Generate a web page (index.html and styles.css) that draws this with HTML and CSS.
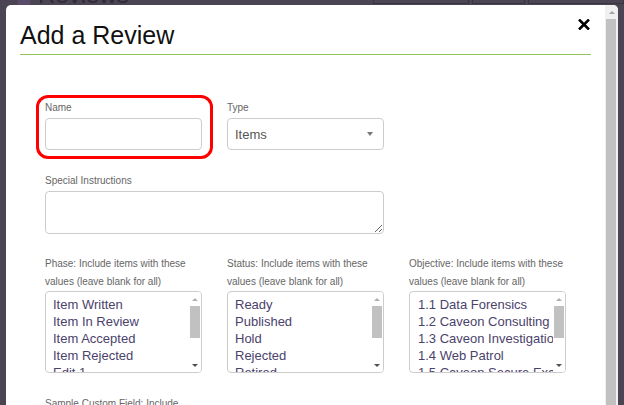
FILE: index.html
```html
<!DOCTYPE html>
<html lang="en">
<head>
<meta charset="utf-8">
<title>Add a Review</title>
<link rel="stylesheet" href="styles.css">
</head>
<body>
<header class="page-header">
  <div class="page-title"><span class="page-icon"></span><span class="page-name">Reviews</span></div>
  <div class="page-actions">
    <span class="page-btn btn-wide">Proficiency Levels</span>
    <span class="page-btn">Users</span>
    <span class="page-btn">Add a Review</span>
  </div>
</header>

<div class="modal">
  <div class="modal-main">
    <div class="modal-header"><h1 class="modal-title">Add a Review</h1></div>
    <button class="close" type="button" aria-label="Close">
      <svg width="12" height="11" viewBox="0 0 12 11"><path d="M1 0.5 L11 10.5 M11 0.5 L1 10.5" stroke="#000" stroke-width="2.6" fill="none"/></svg>
    </button>

    <form class="form">
      <div class="row">
        <div class="field name-field">
          <label class="label">Name</label>
          <input class="input" type="text">
          <span class="highlight"></span>
        </div>
        <div class="field">
          <label class="label">Type</label>
          <div class="select">Items<span class="caret"></span></div>
        </div>
      </div>

      <div class="field wide">
        <label class="label">Special Instructions</label>
        <textarea class="textarea"></textarea>
      </div>

      <div class="row">
        <div class="field">
          <label class="label">Phase: Include items with these values (leave blank for all)</label>
          <div class="listbox">
            <div class="options">
              <div>Item Written</div><div>Item In Review</div><div>Item Accepted</div><div>Item Rejected</div><div>Edit 1</div>
            </div>
            <div class="lb-scroll"><span class="lb-up"></span><span class="lb-thumb"></span><span class="lb-space"></span><span class="lb-down"></span></div>
          </div>
        </div>
        <div class="field">
          <label class="label">Status: Include items with these values (leave blank for all)</label>
          <div class="listbox">
            <div class="options">
              <div>Ready</div><div>Published</div><div>Hold</div><div>Rejected</div><div>Retired</div>
            </div>
            <div class="lb-scroll"><span class="lb-up"></span><span class="lb-thumb"></span><span class="lb-space"></span><span class="lb-down"></span></div>
          </div>
        </div>
        <div class="field">
          <label class="label">Objective: Include items with these values (leave blank for all)</label>
          <div class="listbox">
            <div class="options obj">
              <div>1.1 Data Forensics</div><div>1.2 Caveon Consulting</div><div>1.3 Caveon Investigations</div><div>1.4 Web Patrol</div><div>1.5 Caveon Secure Exam</div>
            </div>
            <div class="lb-scroll"><span class="lb-up"></span><span class="lb-thumb"></span><span class="lb-space"></span><span class="lb-down"></span></div>
          </div>
        </div>
      </div>

      <div class="row">
        <div class="field">
          <label class="label">Sample Custom Field: Include values (leave blank for all)</label>
        </div>
      </div>
    </form>
  </div>
  <div class="vscroll"><span class="vs-up"></span><span class="vs-thumb"></span></div>
</div>
</body>
</html>
```

FILE: styles.css
```css
html, body {
  margin: 0;
  padding: 0;
  height: 100%;
}
body {
  background: #4b4553;
  overflow: hidden;
  font-family: "Liberation Sans", Arial, sans-serif;
}

/* dimmed page behind the modal */
.page-header {
  height: 5px;
  overflow: hidden;
  display: flex;
  justify-content: space-between;
  align-items: flex-end;
  padding-left: 18px;
}
.page-title {
  display: flex;
  align-items: flex-end;
  gap: 8px;
  margin-bottom: -2px;
}
.page-icon {
  width: 12px;
  height: 20px;
  background: #5a4b68;
}
.page-name {
  font-size: 24px;
  line-height: 24px;
  color: #302a36;
}
.page-actions {
  display: flex;
  gap: 3px;
  margin-bottom: 1px;
}
.page-btn {
  border: 1px solid #3a3440;
  padding: 4px 10px;
  font-size: 12px;
  color: #2f2a35;
  line-height: 14px;
}
.btn-wide { width: 74px; }

/* modal */
.modal {
  position: absolute;
  top: 5px;
  left: 6px;
  width: 612px;
  height: 420px;
  display: flex;
  background: #fff;
  border-radius: 5px 5px 0 0;
  overflow: hidden;
}
.modal-main {
  flex: 1;
  position: relative;
}
.modal-header {
  margin: 0 14px;
  padding: 16px 0 5px;
  border-bottom: 1px solid #93c558;
}
.modal-title {
  margin: 0;
  font-size: 25px;
  line-height: 28px;
  font-weight: normal;
  color: #111;
}
.close {
  position: absolute;
  top: 14px;
  right: 15px;
  border: 0;
  background: none;
  padding: 0;
  width: 12px;
  height: 11px;
  display: flex;
}

.vscroll {
  width: 13px;
  background: #f0f0f0;
  display: flex;
  flex-direction: column;
  align-items: center;
}
.vs-up {
  margin-top: 6px;
  margin-bottom: 5px;
  width: 0;
  height: 0;
  border-left: 3px solid transparent;
  border-right: 3px solid transparent;
  border-bottom: 3px solid #a3a3a3;
}
.vs-thumb {
  align-self: stretch;
  margin: 0 2px 0 1px;
  flex: 1;
  background: #c1c1c1;
}

/* form */
.form {
  padding: 42px 0 0 39px;
}
.row {
  display: grid;
  grid-template-columns: repeat(3, 157px);
  column-gap: 25px;
  margin-bottom: 20px;
}
.field {
  position: relative;
  display: flex;
  flex-direction: column;
}
.wide {
  width: 339px;
  margin-bottom: 19px;
}
.label {
  display: block;
  font-size: 10px;
  line-height: 18px;
  color: #666;
  padding-top: 2px;
  margin-bottom: 1px;
}
.input, .select, .textarea {
  box-sizing: border-box;
  border: 1px solid #ccc;
  border-radius: 4px;
  background: #fff;
  font-family: "Liberation Sans", Arial, sans-serif;
}
.input {
  width: 157px;
  height: 32px;
  margin: 0;
  padding: 0 8px;
}
.select {
  width: 157px;
  height: 32px;
  display: flex;
  align-items: center;
  justify-content: space-between;
  padding: 0 10px 0 7px;
  font-size: 13px;
  color: #555;
}
.caret {
  width: 0;
  height: 0;
  border-left: 3px solid transparent;
  border-right: 3px solid transparent;
  border-top: 4px solid #777;
}
.textarea {
  display: block;
  width: 339px;
  height: 43px;
  margin: 0;
  resize: vertical;
}
.highlight {
  position: absolute;
  left: -9px;
  top: -2px;
  width: 177px;
  height: 64px;
  box-sizing: border-box;
  border: 3px solid #f00;
  border-radius: 12px;
  pointer-events: none;
}

/* listboxes */
.listbox {
  box-sizing: border-box;
  width: 157px;
  height: 82px;
  border: 1px solid #ccc;
  border-radius: 4px;
  display: flex;
  overflow: hidden;
  margin-top: -1px;
}
.options {
  flex: 1;
  min-width: 0;
  overflow: hidden;
  white-space: nowrap;
  padding: 4px 0 0 7px;
  font-size: 13px;
  line-height: 17px;
  color: #4b426c;
}
.options.obj { padding-left: 8px; }
.lb-scroll {
  width: 12px;
  display: flex;
  flex-direction: column;
  align-items: center;
  background: #fff;
}
.lb-up {
  margin-top: 6px;
  margin-bottom: 5px;
  width: 0;
  height: 0;
  border-left: 3px solid transparent;
  border-right: 3px solid transparent;
  border-bottom: 3px solid #b0b0b0;
}
.lb-thumb {
  align-self: stretch;
  margin: 0 1px;
  height: 32px;
  background: #c1c1c1;
}
.lb-space { flex: 1; }
.lb-down {
  margin-bottom: 5px;
  width: 0;
  height: 0;
  border-left: 3px solid transparent;
  border-right: 3px solid transparent;
  border-top: 3px solid #505050;
}
```
